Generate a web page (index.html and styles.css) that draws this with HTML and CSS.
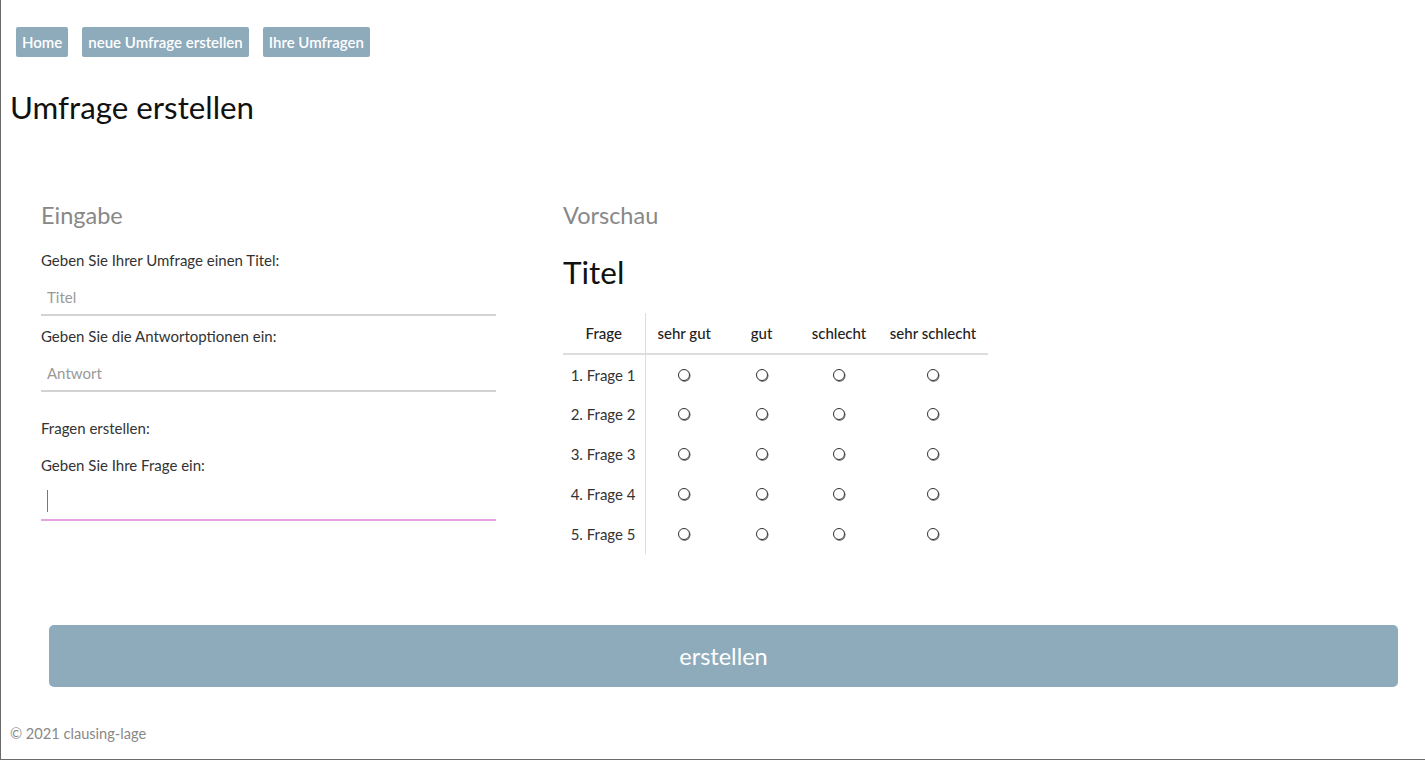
FILE: index.html
```html
<!DOCTYPE html>
<html lang="de">
<head>
<meta charset="utf-8">
<title>Umfrage erstellen</title>
<link rel="stylesheet" href="styles.css">
</head>
<body>
<div class="page">
  <nav class="nav">
    <a class="nav-btn" href="#">Home</a>
    <a class="nav-btn" href="#">neue Umfrage erstellen</a>
    <a class="nav-btn" href="#">Ihre Umfragen</a>
  </nav>
  <h1 class="page-title">Umfrage erstellen</h1>
  <main class="main">
    <section class="input-col">
      <h2 class="section-title">Eingabe</h2>
      <label class="label">Geben Sie Ihrer Umfrage einen Titel:</label>
      <div class="field"><span class="placeholder">Titel</span></div>
      <label class="label label-2">Geben Sie die Antwortoptionen ein:</label>
      <div class="field"><span class="placeholder">Antwort</span></div>
      <p class="label label-3">Fragen erstellen:</p>
      <label class="label label-4">Geben Sie Ihre Frage ein:</label>
      <div class="field field-focus"><span class="caret"></span></div>
    </section>
    <section class="preview-col">
      <h2 class="section-title">Vorschau</h2>
      <div class="preview-title">Titel</div>
      <table class="survey">
        <thead>
          <tr><th class="q">Frage</th><th class="c1">sehr gut</th><th class="c2">gut</th><th class="c3">schlecht</th><th class="c4">sehr schlecht</th></tr>
        </thead>
        <tbody>
          <tr><td class="q">1. Frage 1</td><td><span class="radio"></span></td><td><span class="radio"></span></td><td><span class="radio"></span></td><td><span class="radio"></span></td></tr>
          <tr><td class="q">2. Frage 2</td><td><span class="radio"></span></td><td><span class="radio"></span></td><td><span class="radio"></span></td><td><span class="radio"></span></td></tr>
          <tr><td class="q">3. Frage 3</td><td><span class="radio"></span></td><td><span class="radio"></span></td><td><span class="radio"></span></td><td><span class="radio"></span></td></tr>
          <tr><td class="q">4. Frage 4</td><td><span class="radio"></span></td><td><span class="radio"></span></td><td><span class="radio"></span></td><td><span class="radio"></span></td></tr>
          <tr><td class="q">5. Frage 5</td><td><span class="radio"></span></td><td><span class="radio"></span></td><td><span class="radio"></span></td><td><span class="radio"></span></td></tr>
        </tbody>
      </table>
    </section>
  </main>
  <div class="submit-wrap"><button class="submit">erstellen</button></div>
  <footer class="footer">© 2021 clausing-lage</footer>
</div>
</body>
</html>
```
FILE: styles.css
```css
* { box-sizing: border-box; }
html, body { margin: 0; padding: 0; background: #fff; }
body {
  font-family: "Lato", "Open Sans", sans-serif;
  color: #222;
}
.page {
  height: 760px;
  border-left: 1px solid #6a6a6a;
  border-bottom: 1px solid #6a6a6a;
  display: flex;
  flex-direction: column;
}
.nav {
  display: flex;
  gap: 14px;
  padding: 27px 0 0 15px;
}
.nav-btn {
  display: block;
  height: 30px;
  line-height: 30px;
  padding: 0 6px;
  background: #8eabbc;
  color: #fff;
  border-radius: 2px;
  text-decoration: none;
  font-size: 15px;
  font-weight: 600;
}
.page-title {
  margin: 30px 0 0 9px;
  font-size: 31.3px;
  font-weight: 400;
  line-height: 40px;
  color: #111;
}
.main {
  display: grid;
  grid-template-columns: 455px 1fr;
  column-gap: 67px;
  padding: 73px 0 0 40px;
  align-items: start;
}
.section-title {
  margin: 0;
  font-size: 23.5px;
  font-weight: 400;
  line-height: 30px;
  color: #888;
}
.label {
  display: block;
  margin: 20px 0 0;
  font-size: 15px;
  line-height: 20px;
  color: #333;
}
.label-2 { margin-top: 10px; }
.label-3 { margin-top: 26px; }
.label-4 { margin-top: 17px; }
.field {
  height: 46px;
  border-bottom: 2px solid #d3d3d3;
  padding: 0 6px 8px;
  display: flex;
  align-items: flex-end;
}
.field-focus {
  padding-bottom: 7px;
  border-bottom-color: #e4a3e4;
}
.placeholder {
  font-size: 15px;
  line-height: 18px;
  color: #999;
}
.caret {
  display: block;
  width: 1px;
  height: 22px;
  background: #777;
}
.preview-title {
  margin-top: 22px;
  font-size: 31.5px;
  line-height: 40px;
  color: #111;
}
.survey {
  margin-top: 21px;
  border-collapse: collapse;
  font-size: 15px;
  color: #222;
}
.survey th {
  font-weight: 500;
  height: 41px;
  border-bottom: 2px solid #ddd;
  padding: 0;
  text-align: center;
}
.survey td {
  height: 40px;
  text-align: center;
  vertical-align: middle;
  padding: 0;
  line-height: 0;
}
.survey td.q {
  font-size: 15px;
  line-height: 20px;
  text-align: right;
  padding-right: 9px;
  color: #333;
}
.radio {
  display: inline-block;
  width: 12px;
  height: 12px;
  border: 1.4px solid #333;
  border-radius: 50%;
  box-shadow: 0.5px 0.7px 0 #555;
}
.survey .q { width: 82px; border-right: 1px solid #ddd; }
.survey th.q { text-align: center; }
.survey .c1 { width: 78px; }
.survey .c2 { width: 77px; }
.survey .c3 { width: 78px; }
.survey .c4 { width: 110px; }
.submit-wrap {
  padding: 71px 27px 0 48px;
}
.submit {
  display: block;
  width: 100%;
  height: 62px;
  border: none;
  border-radius: 5px;
  background: #8eabbc;
  color: #fff;
  font-family: "Lato", "Open Sans", sans-serif;
  font-size: 23.5px;
}
.footer {
  margin: 38px 0 0 9px;
  font-size: 14.6px;
  color: #888;
}
```
